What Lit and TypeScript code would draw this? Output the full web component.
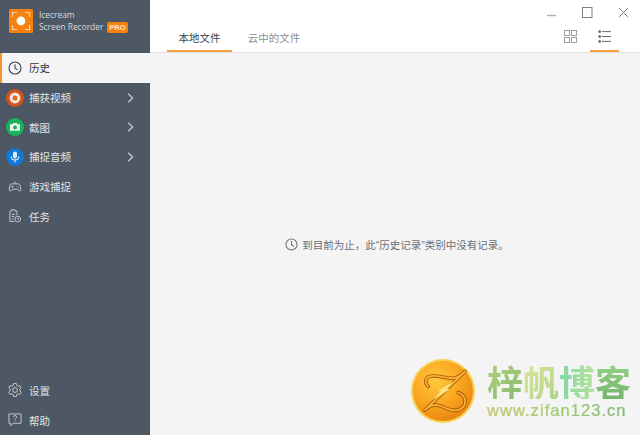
import { LitElement, html, css, svg } from 'lit';
import { customElement } from 'lit/decorators.js';

const clock = (size: number, color: string) => html`
  <svg width=${size} height=${size} viewBox="0 0 14 14" fill="none" stroke=${color} stroke-width="1.1">
    <circle cx="7" cy="7" r="6"></circle>
    <path d="M7 3.2V7.3L9.6 8.9"></path>
  </svg>`;

const chevron = html`
  <svg class="chev" width="7" height="10" viewBox="0 0 7 10" fill="none" stroke="#c9ced3" stroke-width="1.2">
    <path d="M1.2 .8L5.6 5L1.2 9.2"></path>
  </svg>`;

const recordIcon = html`
  <svg width="18" height="18" viewBox="0 0 18 18">
    <circle cx="9" cy="9" r="9" fill="#d2551f"></circle>
    <circle cx="9" cy="9" r="5.4" fill="#f6e9e0"></circle>
    <circle cx="9" cy="9" r="2.5" fill="#e2691f"></circle>
  </svg>`;

const cameraIcon = html`
  <svg width="18" height="18" viewBox="0 0 18 18">
    <circle cx="9" cy="9" r="9" fill="#17b45c"></circle>
    <path d="M4 6.2H6.4L7.2 5H10.8L11.6 6.2H14V12.8H4Z" fill="#e8f7ee"></path>
    <circle cx="9" cy="9.4" r="2" fill="#17b45c"></circle>
  </svg>`;

const micIcon = html`
  <svg width="18" height="18" viewBox="0 0 18 18">
    <circle cx="9" cy="9" r="9" fill="#1479d6"></circle>
    <rect x="7" y="3.4" width="4" height="7.2" rx="2" fill="#dcecfa"></rect>
    <path d="M5.2 8.4C5.2 13 12.8 13 12.8 8.4M9 12V14.6" fill="none" stroke="#dcecfa" stroke-width="1.1"></path>
  </svg>`;

const gameIcon = html`
  <svg width="14" height="14" viewBox="0 0 18 18" fill="none" stroke="#c9ced3" stroke-width="1.2">
    <path d="M5 5H13C14.6 5 15.4 6 15.7 7.6L16.5 12C16.8 14 14.8 14.8 13.6 13.4L12.2 11.8H5.8L4.4 13.4C3.2 14.8 1.2 14 1.5 12L2.3 7.6C2.6 6 3.4 5 5 5Z"></path>
    <path d="M9 5V2M4.6 8.6H7.2M5.9 7.3V9.9M11 8.2H11.8M12.6 9.6H13.4"></path>
  </svg>`;

const taskIcon = html`
  <svg width="14" height="14" viewBox="0 0 18 18" fill="none" stroke="#c9ced3" stroke-width="1.2">
    <path d="M8.5 16H2.5V2.6H4.8V1H9V2.6H11.5V8"></path>
    <path d="M5 6.8H9M5 9.8H8M5 12.8H7"></path>
    <circle cx="12.6" cy="13" r="3.6"></circle>
    <path d="M12.6 11V13.1H14.2"></path>
  </svg>`;

const gearIcon = html`
  <svg width="14" height="14" viewBox="1.5 1.5 15 15" fill="none" stroke="#c9ced3" stroke-width="1">
    <path d="M7.6 2H10.4L10.8 4L12.4 4.9L14.3 4.2L15.7 6.6L14.2 8V10L15.7 11.4L14.3 13.8L12.4 13.1L10.8 14L10.4 16H7.6L7.2 14L5.6 13.1L3.7 13.8L2.3 11.4L3.8 10V8L2.3 6.6L3.7 4.2L5.6 4.9L7.2 4Z"></path>
    <circle cx="9" cy="9" r="2.6"></circle>
  </svg>`;

const helpIcon = html`
  <svg width="14" height="14" viewBox="1.5 2 15 15" fill="none" stroke="#c9ced3" stroke-width="1">
    <path d="M2.5 3H15.5V13H7L4.5 15.6V13H2.5Z"></path>
    <path d="M7.2 6.2C7.2 4.2 10.8 4.2 10.8 6.2C10.8 7.6 9 7.6 9 9.2M9 10.2V11.2"></path>
  </svg>`;

const logo = html`
  <svg width="24" height="24" viewBox="0 0 24 24">
    <rect width="24" height="24" rx="1.5" fill="#f5820f"></rect>
    <path d="M3.5 8V3.5H8M16 3.5H20.5V8M20.5 16V20.5H16M8 20.5H3.5V16" fill="none" stroke="#fbd3a6" stroke-width="1.2"></path>
    <circle cx="12" cy="12" r="4.4" fill="#fff"></circle>
  </svg>`;

// swoopy Z of the watermark coin, stroked twice for the embossed edge
const coinZ = 'M18.3 28.5C14 24 15 18.5 22 18C31 17.4 38 21.5 45 20C49 19 52 16.5 55 13.5L15 52C20 47 26 46 32 48.5C38 51 45 55 52 50C57 46 56 37 48.3 34.5';

const medal = html`
  <svg width="66" height="66" viewBox="0 0 66 66">
    <defs>
      <radialGradient id="gold" cx="38%" cy="32%" r="75%">
        <stop offset="0" stop-color="#ffc93f"></stop>
        <stop offset=".55" stop-color="#f9a51e"></stop>
        <stop offset="1" stop-color="#e5820e"></stop>
      </radialGradient>
    </defs>
    <circle cx="33" cy="33" r="32" fill="#f7d253"></circle>
    <circle cx="33" cy="33" r="30" fill="url(#gold)"></circle>
    <g fill="none" stroke-linecap="round" stroke-linejoin="round">
      <path d=${coinZ} stroke="#a9570a" stroke-width="3.6"></path>
      <path d=${coinZ} stroke="#f9b233" stroke-width="1.8"></path>
    </g>
    <path d="M22 42L31 33.5L28 33L44 23L36.5 31L39.5 31.5Z" fill="#ffe98a"></path>
  </svg>`;

interface NavItem {
  label: string;
  icon: unknown;
  arrow?: boolean;
  active?: boolean;
}

const topItems: NavItem[] = [
  { label: '历史', icon: clock(14, '#3d4650'), active: true },
  { label: '捕获视频', icon: recordIcon, arrow: true },
  { label: '截图', icon: cameraIcon, arrow: true },
  { label: '捕捉音频', icon: micIcon, arrow: true },
  { label: '游戏捕捉', icon: gameIcon },
  { label: '任务', icon: taskIcon },
];

const bottomItems: NavItem[] = [
  { label: '设置', icon: gearIcon },
  { label: '帮助', icon: helpIcon },
];

@customElement('app-root')
export class AppRoot extends LitElement {
  static styles = css`
    :host {
      display: flex;
      width: 640px;
      height: 435px;
      position: relative;
      overflow: hidden;
      font-family: 'Noto Sans CJK SC', 'Noto Sans', sans-serif;
      font-size: 10.5px;
      background: #f4f4f4;
    }
    .sidebar {
      width: 150px;
      flex-shrink: 0;
      display: flex;
      flex-direction: column;
      background: #4e5864;
      color: #e1e4e7;
    }
    .brand {
      height: 53px;
      display: flex;
      align-items: flex-start;
      gap: 6px;
      padding: 9px 0 0 9px;
      box-sizing: border-box;
    }
    .brand-text {
      font-family: 'Open Sans', sans-serif;
      font-size: 8.4px;
      line-height: 12px;
      color: #d6dade;
    }
    .brand-line { display: flex; align-items: center; gap: 4px; white-space: nowrap; }
    .pro {
      font-family: 'Liberation Sans', sans-serif;
      font-weight: 700;
      font-size: 7.5px;
      line-height: 11px;
      padding: 0 2px;
      border-radius: 2px;
      background: #f5820f;
      color: #fde6cc;
    }
    .nav { display: flex; flex-direction: column; }
    .nav.bottom { margin-top: auto; }
    .item {
      height: 29.7px;
      display: flex;
      align-items: center;
      box-sizing: border-box;
      padding-left: 6px;
      position: relative;
    }
    .item.active {
      background: #f4f4f4;
      color: #333a42;
      box-shadow: inset 2px 0 0 #f5932b;
    }
    .icon {
      width: 18px;
      display: flex;
      justify-content: center;
      margin-right: 5px;
    }
    .chev { position: absolute; left: 127px; top: 10px; }
    .main { flex: 1; display: flex; flex-direction: column; min-width: 0; }
    .top {
      height: 53px;
      box-sizing: border-box;
      background: #fff;
      border-bottom: 1px solid #e2e2e2;
      display: flex;
      flex-direction: column;
    }
    .win {
      display: flex;
      justify-content: flex-end;
      height: 23px;
      padding: 6px 0 0 0;
      margin-right: -1px;
      box-sizing: border-box;
    }
    .win span { width: 36px; height: 13px; display: flex; justify-content: center; }
    .bar { flex: 1; display: flex; align-items: stretch; justify-content: space-between; }
    .tabs { display: flex; padding-left: 17px; gap: 16px; }
    .tab {
      display: flex;
      justify-content: center;
      align-items: center;
      height: 30px;
      box-sizing: border-box;
      padding-top: 1px;
      white-space: nowrap;
      color: #8a8f94;
    }
    .tab.active { color: #3a3f45; box-shadow: inset 0 -2px 0 #f5a03c; width: 65px; }
    .tab.cloud { width: 52px; }
    .views { display: flex; padding-right: 21px; gap: 5px; }
    .view {
      width: 29px;
      height: 30px;
      box-sizing: border-box;
      padding-bottom: 2px;
      display: flex;
      align-items: center;
      justify-content: center;
    }
    .view.active { box-shadow: inset 0 -2px 0 #f5a03c; }
    .empty {
      flex: 1;
      display: flex;
      align-items: center;
      justify-content: center;
      gap: 4px;
      padding-left: 4px;
      color: #6a6f75;
      font-family: 'Liberation Sans', 'Noto Sans CJK SC', sans-serif;
      font-size: 10.5px;
    }
    .watermark {
      position: absolute;
      left: 410px;
      top: 358px;
      display: flex;
      gap: 11px;
    }
    .wm-text { display: flex; flex-direction: column; margin-top: 5px; gap: 3px; }
    .wm-cn {
      display: flex;
      font-weight: 700;
      font-size: 36px;
      line-height: 36px;
      height: 36px;
    }
    .wm-cn span { -webkit-background-clip: text; background-clip: text; color: transparent; }
    .c1 { background: linear-gradient(135deg, #b5cf80, #84bb6c); }
    .c2 { background: linear-gradient(135deg, #dce89a, #add284); }
    .c3 { background: linear-gradient(90deg, #82d6a6, #b4e49a); }
    .c4 { background: linear-gradient(180deg, #94d384, #74b56c); }
    .wm-url {
      font-family: 'Liberation Sans', sans-serif;
      font-size: 16.5px;
      letter-spacing: 1.05px;
      line-height: 17px;
      white-space: nowrap;
      background: linear-gradient(90deg, #cfc864, #a6cc70 45%, #74b87c);
      -webkit-background-clip: text;
      background-clip: text;
      color: transparent;
      -webkit-text-stroke: 0.2px #a8c87c;
    }
  `;

  private renderItem(item: NavItem) {
    return html`
      <div class="item ${item.active ? 'active' : ''}">
        <div class="icon">${item.icon}</div>
        <span>${item.label}</span>
        ${item.arrow ? chevron : ''}
      </div>
    `;
  }

  render() {
    return html`
      <aside class="sidebar">
        <div class="brand">
          ${logo}
          <div class="brand-text">
            <div>Icecream</div>
            <div class="brand-line">Screen Recorder <span class="pro">PRO</span></div>
          </div>
        </div>
        <nav class="nav">${topItems.map((i) => this.renderItem(i))}</nav>
        <nav class="nav bottom">${bottomItems.map((i) => this.renderItem(i))}</nav>
      </aside>
      <section class="main">
        <header class="top">
          <div class="win">
            <span>
              <svg width="11" height="13" viewBox="0 0 11 13" stroke="#aeb1b4" stroke-width="1.4"><path d="M1 9.5H10"></path></svg>
            </span>
            <span>
              <svg width="11" height="13" viewBox="0 0 11 13" fill="none" stroke="#7d8186" stroke-width="1"><rect x=".5" y="1.5" width="9.5" height="10"></rect></svg>
            </span>
            <span>
              <svg width="11" height="13" viewBox="0 0 11 13" fill="none" stroke="#7d8186" stroke-width="1"><path d="M1 2L10 11M10 2L1 11"></path></svg>
            </span>
          </div>
          <div class="bar">
            <div class="tabs">
              <div class="tab active">本地文件</div>
              <div class="tab cloud">云中的文件</div>
            </div>
            <div class="views">
              <div class="view">
                <svg width="13" height="13" viewBox="0 0 13 13" fill="none" stroke="#9a9ea3">
                  <rect x=".5" y=".5" width="5" height="5"></rect><rect x="7.5" y=".5" width="5" height="5"></rect>
                  <rect x=".5" y="7.5" width="5" height="5"></rect><rect x="7.5" y="7.5" width="5" height="5"></rect>
                </svg>
              </div>
              <div class="view active">
                <svg width="14" height="13" viewBox="0 0 14 13" fill="#656a70" stroke="#656a70">
                  ${svg`<circle cx="1.7" cy="1.6" r="1"></circle><circle cx="1.7" cy="6.5" r="1"></circle><circle cx="1.7" cy="11.4" r="1"></circle>
                  <path d="M4 1.6H13M4 6.5H13M4 11.4H13" stroke-width="1"></path>`}
                </svg>
              </div>
            </div>
          </div>
        </header>
        <div class="empty">
          ${clock(13, '#6a6f75')}
          <span>到目前为止，此“历史记录”类别中没有记录。</span>
        </div>
      </section>
      <div class="watermark">
        ${medal}
        <div class="wm-text">
          <div class="wm-cn">
            <span class="c1">梓</span><span class="c2">帆</span><span class="c3">博</span><span class="c4">客</span>
          </div>
          <div class="wm-url">www.zifan123.cn</div>
        </div>
      </div>
    `;
  }
}

declare global {
  interface HTMLElementTagNameMap {
    'app-root': AppRoot;
  }
}
